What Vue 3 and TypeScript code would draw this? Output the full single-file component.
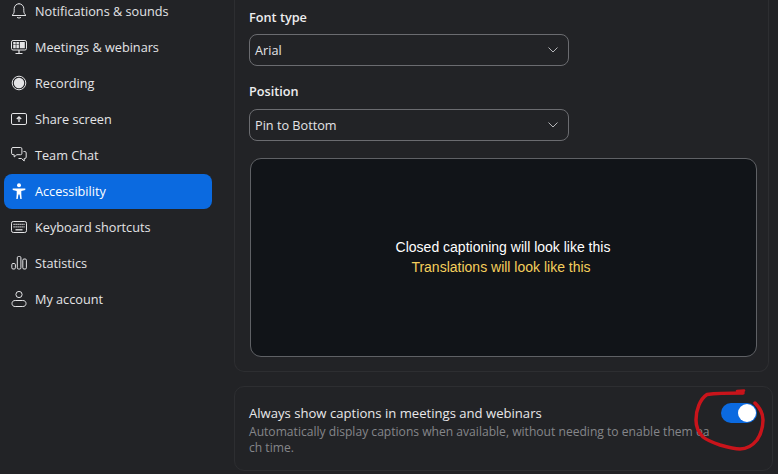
<script setup lang="ts">
interface NavItem {
  label: string
  icon: string
  active?: boolean
}
const items: NavItem[] = [
  { label: 'Notifications & sounds', icon: 'bell' },
  { label: 'Meetings & webinars', icon: 'meet' },
  { label: 'Recording', icon: 'rec' },
  { label: 'Share screen', icon: 'share' },
  { label: 'Team Chat', icon: 'chat' },
  { label: 'Accessibility', icon: 'access', active: true },
  { label: 'Keyboard shortcuts', icon: 'keys' },
  { label: 'Statistics', icon: 'stats' },
  { label: 'My account', icon: 'user' },
]
</script>

<template>
  <div class="page">
    <aside class="side">
      <ul class="nav">
        <li v-for="it in items" :key="it.label" class="row" :class="{ on: it.active }">
          <svg class="ico" width="18" height="18" viewBox="0 0 18 18" fill="none" stroke="currentColor" stroke-width="1">
            <template v-if="it.icon === 'bell'">
              <path d="M2 13.500c1.300-1 2.200-2.600 2.200-4.700V6.600a4.800 4.800 0 0 1 9.600 0v2.200c0 2.100.9 3.700 2.200 4.700z" />
              <path d="M7 15.300c1 .9 3 .9 4 0M9 1v.8" />
            </template>
            <template v-else-if="it.icon === 'meet'">
              <rect x="1.500" y="2.500" width="15" height="9.500" rx="1.600" />
              <path d="M9 12v3.200M5.500 15.500h7" stroke-width="1.200" />
              <path fill="currentColor" stroke="none" d="M3.200 4.100h2.500v2.300H3.200zM6.400 4.100h2.500v2.300H6.400zM3.200 7.100h2.500v3.200H3.200zM6.400 7.100h2.500v3.200H6.400zM9.800 4.100h5v6.200h-5z" />
            </template>
            <template v-else-if="it.icon === 'rec'">
              <circle cx="9" cy="9" r="6.800" />
              <circle cx="9" cy="9" r="5.200" fill="currentColor" stroke="none" />
            </template>
            <template v-else-if="it.icon === 'share'">
              <rect x="1.500" y="3.500" width="15" height="11" rx="1.400" />
              <path d="M9 12V7M6.800 9 9 6.800 11.200 9" stroke-width="1.300" />
            </template>
            <template v-else-if="it.icon === 'chat'">
              <path d="M3 1.500h7.500a1.400 1.400 0 0 1 1.400 1.400v4.400a1.400 1.400 0 0 1-1.400 1.400H6.800L4.200 11V8.700H3a1.400 1.400 0 0 1-1.400-1.400V2.900A1.400 1.400 0 0 1 3 1.500z" />
              <path d="M13.500 5.500h1.300a1.400 1.400 0 0 1 1.400 1.400v4.200a1.400 1.400 0 0 1-1.400 1.400h-.600v2.500l-2.700-2.500h-3" />
            </template>
            <template v-else-if="it.icon === 'access'">
              <circle cx="9" cy="3.300" r="2" fill="currentColor" stroke="none" />
              <path fill="currentColor" stroke="none" d="M2.700 6.400h12.600V8l-4 .9v3l.4 5.100h-1.400l-.7-4.400H8.400L7.700 17H6.300l.4-5.100v-3l-4-.9z" />
            </template>
            <template v-else-if="it.icon === 'keys'">
              <rect x="1.500" y="3.500" width="15" height="11" rx="1.800" />
              <path stroke-dasharray="1.200 .8" stroke-width="1.300" d="M3.500 6.300h11M3.500 8.800h11" />
              <path stroke-width="1.300" d="M5.500 11.800h7" />
            </template>
            <template v-else-if="it.icon === 'stats'">
              <rect x="1.800" y="9.500" width="3.600" height="5.500" rx="1.200" />
              <rect x="7.300" y="2.500" width="3.600" height="12.500" rx="1.200" />
              <rect x="12.800" y="5" width="3.600" height="10" rx="1.200" />
            </template>
            <template v-else>
              <circle cx="9" cy="4.500" r="3.100" />
              <path d="M5.200 10.500h7.600c2 0 3.200 1.100 3.200 3s-1.200 3-3.200 3H5.200c-2 0-3.200-1.100-3.200-3s1.200-3 3.200-3z" />
            </template>
          </svg>
          <span>{{ it.label }}</span>
        </li>
      </ul>
    </aside>

    <main class="main">
      <section class="card top">
        <h3 class="label">Font type</h3>
        <div class="select">
          <span>Arial</span>
          <svg width="12" height="8" viewBox="0 0 12 8" fill="none" stroke="currentColor" stroke-width="1"><path d="M1.500 1.500 6 6l4.500-4.500" /></svg>
        </div>
        <h3 class="label second">Position</h3>
        <div class="select">
          <span>Pin to Bottom</span>
          <svg width="12" height="8" viewBox="0 0 12 8" fill="none" stroke="currentColor" stroke-width="1"><path d="M1.500 1.500 6 6l4.500-4.500" /></svg>
        </div>
        <div class="preview">
          <p class="cc">Closed captioning will look like this</p>
          <p class="tr">Translations will look like this</p>
        </div>
      </section>

      <section class="card bottom">
        <div class="copy">
          <p class="title">Always show captions in meetings and webinars</p>
          <p class="desc">Automatically display captions when available, without needing to enable them each time.</p>
        </div>
        <div class="toggle"><i></i></div>
      </section>
    </main>

    <svg class="scribble" width="88" height="75" viewBox="0 0 88 75" fill="none" stroke="#c9141b" stroke-width="3.500" stroke-linecap="round" stroke-linejoin="round">
      <path d="M53 8 C42 8 28 8 17 9.500 C10 14 6 25 6 35 C6 43 9 48 13 52 C18 56 24 58 30 60 C37 62 44 64 50 64 C57 64 63 60 67 55 C71 49 73 42 73 35 C73 28 70 23 65 18" />
      <path d="M47 6 L54 5.500 L52 8" stroke-width="2.600" />
    </svg>
  </div>
</template>

<style>
html, body { margin: 0; background: #222326; }
</style>

<style scoped>
.page {
  position: relative;
  display: flex;
  width: 778px;
  height: 474px;
  overflow: hidden;
  background: #222326;
  color: #e8e8ea;
  font-family: "Open Sans", "Noto Sans", sans-serif;
  font-size: 12.700px;
}
.side {
  width: 234px;
  flex: none;
  box-sizing: border-box;
  padding-left: 4px;
  padding-right: 22px;
}
.nav {
  list-style: none;
  margin: -6px 0 0;
  padding: 0;
}
.row {
  display: flex;
  align-items: center;
  gap: 7px;
  height: 35px;
  box-sizing: border-box;
  margin-bottom: 1px;
  padding-left: 6px;
  padding-bottom: 1px;
  border-radius: 8px;
  color: #e4e4e6;
}
.row.on {
  background: #0b6ae0;
  color: #fff;
}
.ico { flex: none; }
.main {
  flex: 1;
  min-width: 0;
  padding-right: 5px;
  display: flex;
  flex-direction: column;
  gap: 14px;
}
.card {
  border: 1px solid #2d2e31;
  border-radius: 10px;
  box-sizing: border-box;
  padding-left: 14px;
  padding-right: 15px;
}
.top {
  height: 392px;
  margin-top: -20px;
  padding-top: 28px;
  padding-right: 11px;
  margin-right: 4px;
  border-top: 0;
  border-top-left-radius: 0;
  border-top-right-radius: 0;
}
.label {
  margin: 0 0 8px;
  height: 18px;
  line-height: 18px;
  font-size: 12.700px;
  font-weight: 600;
  color: #eeeeef;
}
.second { margin-top: 16px; margin-bottom: 9px; }
.select {
  width: 320px;
  height: 32px;
  box-sizing: border-box;
  border: 1px solid #6b6c70;
  border-radius: 8px;
  padding: 0 9px 0 5px;
  display: flex;
  align-items: center;
  justify-content: space-between;
  color: #e4e4e6;
}
.select svg { color: #b5b6b9; }
.preview {
  margin-top: 17px;
  margin-left: 1px;
  height: 199px;
  box-sizing: border-box;
  border: 1px solid #5f6165;
  border-radius: 11px;
  background: #111418;
  display: flex;
  flex-direction: column;
  align-items: center;
  justify-content: center;
  padding-bottom: 2px;
  font-family: "Liberation Sans", Arial, sans-serif;
  font-size: 14px;
  line-height: 20px;
}
.preview p { margin: 0; }
.cc { color: #fff; padding-right: 1px; }
.tr { color: #f5cf5c; padding-right: 5px; }
.bottom {
  height: 85px;
  display: flex;
  justify-content: space-between;
  padding-top: 16px;
}
.copy { width: 464px; }
.title {
  margin: 0;
  font-size: 13.100px;
  line-height: 20px;
  color: #e8e8ea;
}
.desc {
  margin: 1px 0 0;
  font-size: 12.100px;
  line-height: 16px;
  color: #85868a;
  word-break: break-all;
}
.toggle {
  width: 36px;
  height: 20px;
  border-radius: 10px;
  background: #0b6ae0;
  position: relative;
}
.toggle i {
  position: absolute;
  right: 1px;
  top: 1px;
  width: 18px;
  height: 18px;
  border-radius: 50%;
  background: #fff;
}
.scribble {
  position: absolute;
  left: 690px;
  top: 385px;
}
</style>
